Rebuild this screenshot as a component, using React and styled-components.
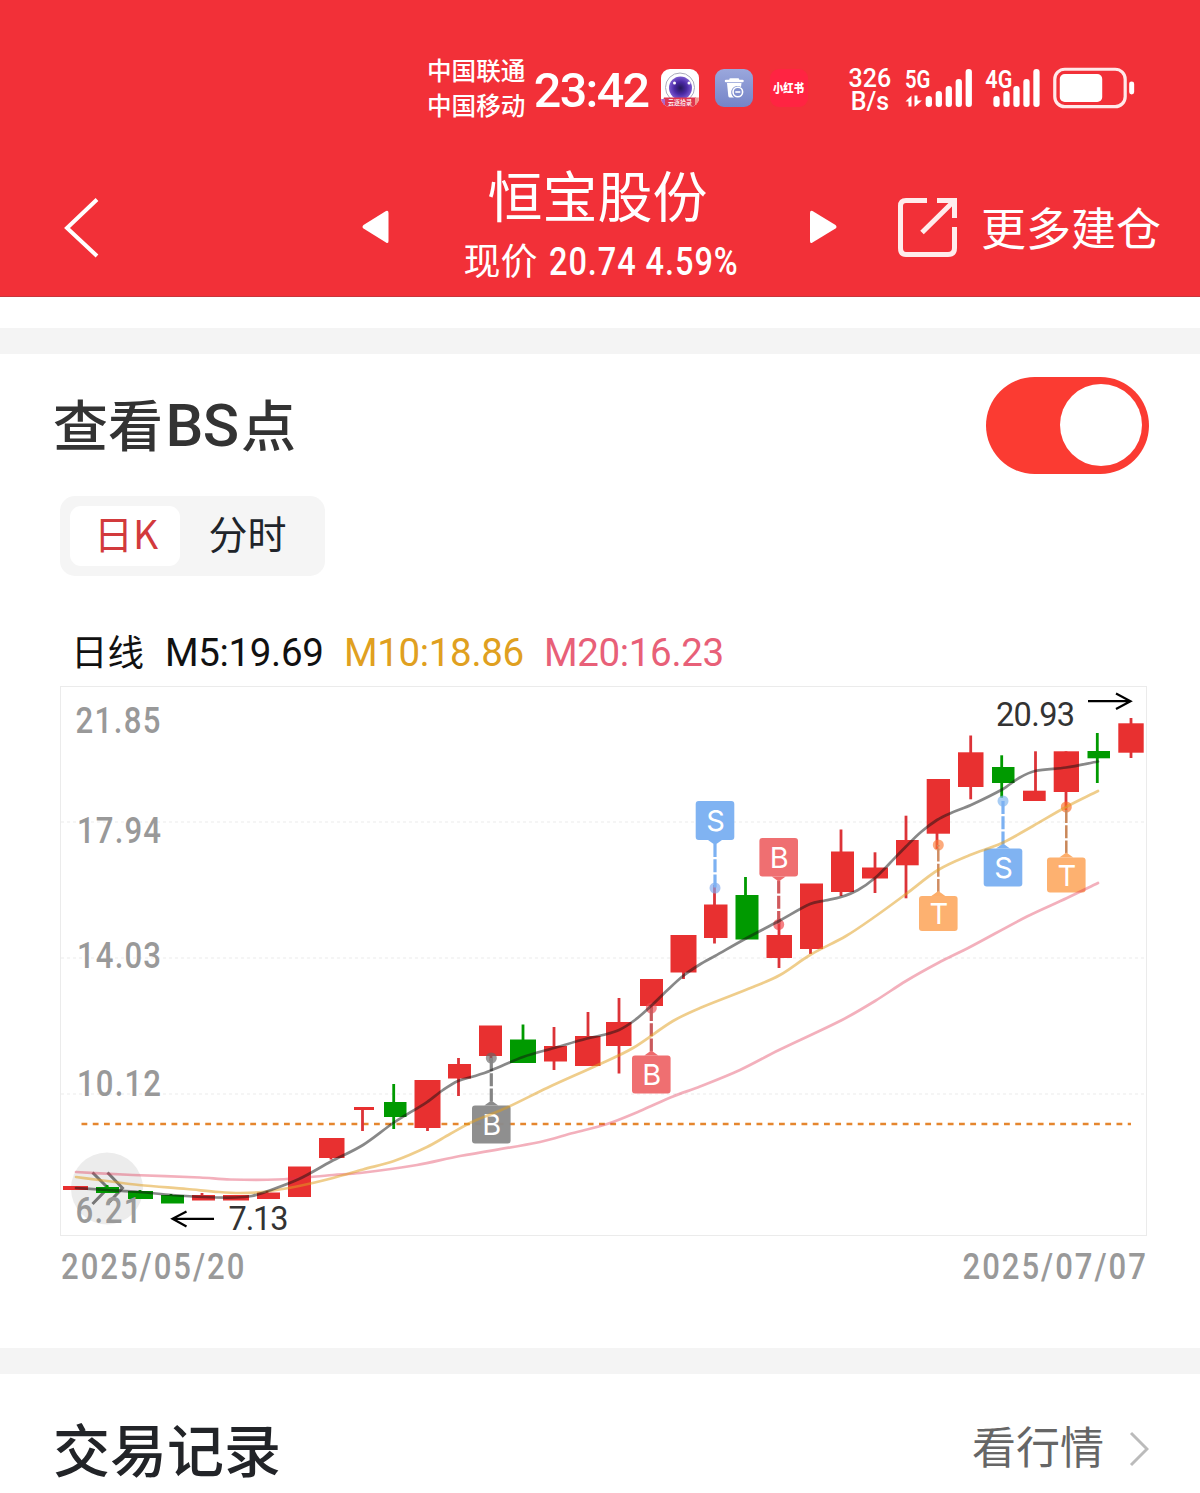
import React from "react";
import styled, { createGlobalStyle } from "styled-components";

const GlobalStyle = createGlobalStyle`
  * { box-sizing: border-box; }
  body { margin: 0; background: #fff; }
`;

const CJK = `"Noto Sans CJK SC", "Noto Sans", sans-serif`;
const DIN = `Roboto, "Noto Sans CJK SC", sans-serif`;

const Page = styled.main`
  width: 1200px;
  height: 1493px;
  overflow: hidden;
  display: flex;
  flex-direction: column;
  background: #fff;
  font-family: ${CJK};
  white-space: nowrap;
`;

const Header = styled.header`
  height: 297px;
  flex: none;
  background: #f23038;
  border-bottom: 1px solid #c8353b;
  color: #fff;
  display: flex;
  flex-direction: column;
`;

const StatusBar = styled.div`
  height: 124px;
  padding: 52px 64px 0 427px;
  display: flex;
  align-items: flex-start;
`;

const Carriers = styled.div`
  width: 107px;
  font-size: 24.6px;
  font-weight: 500;
  line-height: 35px;
`;

const Clock = styled.div`
  width: 127px;
  padding-top: 11px;
  font: 500 48.5px/56px ${DIN};
  letter-spacing: -1.7px;
`;

const AppIcons = styled.div`
  width: 188px;
  padding-top: 17px;
  display: flex;
  gap: 16.5px;
`;

const Speed = styled.div`
  width: 43px;
  margin-right: 13px;
  padding-top: 15px;
  font: 500 25px/23px ${DIN};
  text-align: center;
`;

const Signals = styled.svg`
  display: block;
  margin-top: 13px;
`;

const NavBar = styled.nav`
  flex: 1;
  padding: 0 40px 0 64px;
  display: flex;
  align-items: flex-start;
`;

const NavIcon = styled.svg`
  flex: none;
  margin-top: ${(p) => p.$top}px;
  margin-right: ${(p) => p.$gap}px;
`;

const TitleBlock = styled.div`
  width: 274px;
  margin-right: 72px;
  display: flex;
  flex-direction: column;
  align-items: center;
`;

const StockName = styled.h1`
  margin: 29px 0 0;
  font: 400 55px/80px ${CJK};
  padding-right: 7px;
`;

const Quote = styled.div`
  display: flex;
  gap: 11px;
  width: 275px;
  height: 53px;
  align-items: center;
  font: 400 37px/53px ${CJK};
`;

const QuoteValue = styled.span`
  padding-top: 5px;
  font: 500 38px/53px ${DIN};
  letter-spacing: 1.1px;
  transform: scaleX(0.855);
  transform-origin: left;
  width: 188px;
`;

const MoreLabel = styled.span`
  margin-top: 70px;
  font-size: 45px;
  line-height: 66px;
`;

const Gap = styled.div`
  height: 26px;
  flex: none;
  margin-top: ${(p) => p.$top || 0}px;
  background: #f4f4f4;
`;

const Section = styled.section`
  flex: none;
  display: flex;
  flex-direction: column;
  padding: 0 51px 0 53px;
`;

const SectionHead = styled.div`
  display: flex;
  justify-content: space-between;
  align-items: center;
  height: ${(p) => p.$height}px;
`;

const SectionTitle = styled.h2`
  margin: 0;
  padding-bottom: ${(p) => p.$lift}px;
  display: flex;
  font: 500 ${(p) => p.$size}px/80px ${CJK};
  color: ${(p) => p.$color};
`;

const TitleLatin = styled.span`
  width: 78px;
  padding-top: 2px;
  text-align: center;
  font: 500 60px/84px ${DIN};
  letter-spacing: -0.5px;
`;

const Switch = styled.button`
  width: 163px;
  height: 97px;
  padding: 0 7px;
  border: 0;
  border-radius: 49px;
  background: #fb3b32;
  display: flex;
  justify-content: flex-end;
  align-items: center;
`;

const Knob = styled.span`
  width: 82px;
  height: 82px;
  border-radius: 50%;
  background: #fff;
`;

const Tabs = styled.div`
  width: 265px;
  height: 80px;
  margin: 0 0 0 7px;
  padding: 10px;
  border-radius: 15px;
  background: #f5f5f5;
  display: flex;
`;

const Tab = styled.button`
  width: ${(p) => (p.$active ? 110 : 135)}px;
  height: 60px;
  padding: 0 0 8px ${(p) => (p.$active ? 2 : 0)}px;
  border: 0;
  border-radius: 11px;
  background: ${(p) => (p.$active ? "#fff" : "transparent")};
  color: ${(p) => (p.$active ? "#d23a3c" : "#20242a")};
  font: 400 39px/52px ${CJK};
`;

const Legend = styled.div`
  margin-top: 47px;
  padding-left: 18px;
  height: 63px;
  display: flex;
  gap: 21px;
  font: 400 36.5px/56px ${CJK};
  color: #111;
`;

const LegendItem = styled.span`
  width: ${(p) => p.$width}px;
  padding-top: 2px;
  color: ${(p) => p.$color};
  font: 400 38.5px/56px ${DIN};
  letter-spacing: -0.35px;
`;

const Chart = styled.svg`
  display: block;
  overflow: visible;
  margin: 0 0 0 7px;
`;

const Dates = styled.div`
  display: flex;
  justify-content: space-between;
  margin: 0 1px 0 8px;
  height: 112px;
`;

const DateText = styled.span`
  font: 500 37.5px/60px ${DIN};
  letter-spacing: 2.4px;
  color: #999;
  transform: scaleX(0.828);
  transform-origin: ${(p) => p.$from};
`;

const MarketLink = styled.a`
  display: flex;
  align-items: center;
  gap: 25px;
  color: #666;
  font-size: 44px;
  line-height: 64px;
`;

const LinkText = styled.span`
  padding-bottom: 9px;
`;

const RED = "#e83030";
const GREEN = "#009a00";

// left, right, body top, body bottom, wick x, wick top, wick bottom, rising
const candles = [
  [63, 88, 1186, 1190, 76, 1186, 1190, 1],
  [96, 119, 1187, 1193, 107, 1185, 1193, 0],
  [128, 153, 1191, 1199, 140, 1190, 1199, 0],
  [161, 184, 1195, 1203.5, 171, 1194, 1203, 0],
  [192, 215, 1195, 1200.5, 202, 1193, 1200, 1],
  [223, 249, 1195, 1200.5, 236, 1195, 1200, 1],
  [257, 280, 1192.5, 1199, 267, 1191, 1199, 1],
  [288, 311, 1166.5, 1197, 299, 1167, 1197, 1],
  [319, 344.5, 1138, 1158, 331, 1138, 1159.5, 1],
  [354, 374, 1107, 1110, 362.5, 1107, 1131, 1],
  [384, 406.5, 1102, 1117, 393.7, 1084, 1129, 0],
  [414.5, 440.5, 1080, 1128, 427.5, 1080, 1131, 1],
  [448, 471, 1064, 1078.5, 458.5, 1058, 1096, 1],
  [479, 502, 1025.5, 1056, 491, 1026, 1061, 1],
  [510, 536, 1039.5, 1063, 523, 1024.5, 1063, 0],
  [544, 567, 1046, 1061.5, 554, 1027, 1070, 1],
  [575, 600.5, 1036, 1066, 588, 1012, 1066, 1],
  [606, 631.5, 1022, 1046, 619, 998, 1073.5, 1],
  [640, 663, 979, 1006, 651.5, 979, 1009, 1],
  [670.5, 696.5, 935, 972.5, 683.5, 935, 979, 1],
  [704, 727.5, 904.5, 938, 714.5, 885, 943.5, 1],
  [735.5, 758.5, 895, 939.5, 745.5, 877, 939, 0],
  [766.5, 792, 935, 958, 779, 918, 968, 1],
  [800, 823, 883.5, 949, 810.5, 884, 954, 1],
  [831, 854, 851.5, 892, 841, 829.5, 896, 1],
  [862, 888, 867.5, 878.5, 875, 852.3, 893, 1],
  [896, 918.7, 840, 865.3, 906, 815.7, 898.3, 1],
  [926.7, 950, 779, 833.7, 937, 779, 849, 1],
  [958, 983.5, 752.3, 787, 970.7, 735.5, 799.3, 1],
  [992, 1014.5, 767, 783, 1001.7, 755.3, 797.7, 0],
  [1023, 1045.7, 790.7, 801, 1035.5, 751.3, 801, 1],
  [1053.7, 1079, 751.3, 792, 1066, 751.3, 810, 1],
  [1087.5, 1110, 751, 758.3, 1097.3, 733, 783, 0],
  [1118.3, 1143.7, 723.3, 752.7, 1131, 718, 758, 1],
];

const ma5 = [[76,1188],[107,1190],[139,1192],[172,1195],[203,1197],[235,1197.5],[252,1196],[268,1191],[299,1179],[331,1161.5],[363,1145],[394,1122.5],[427,1102],[443,1090],[458,1081],[475,1076],[491,1070.5],[523,1057],[554,1048],[587,1038.5],[603,1035],[619,1030],[635,1020],[651,1006],[667,990.5],[683,976],[699,965],[715,956],[745,939],[779,921],[810,904],[825,900.5],[841,897],[858,890],[875,878],[890,863],[906,846.5],[921,832],[937,820],[951,813],[971,805],[1003,789],[1019,778],[1035,771],[1066,767.5],[1098,761.5]];
const ma10 = [[76,1177],[107,1181],[139,1185],[187,1189],[219,1192],[240,1193],[262,1192],[299,1186],[333,1178],[363,1169.5],[394,1161],[427,1147],[450,1134],[473,1121.5],[507,1107.5],[547,1088],[600,1064],[633,1048],[673,1021],[700,1008],[753,987],[780,975],[810,955],[846,936],[873,918],[906,894],[938,870],[970,855],[1002,843],[1033,826],[1066,807],[1098,791]];
const ma20 = [[76,1172],[133,1175],[200,1177.5],[230,1179.5],[277,1179.5],[333,1175],[360,1173],[417,1165],[460,1156],[540,1142],[573,1133],[607,1124],[640,1111],[673,1096.5],[700,1086.5],[740,1070],[779,1050],[842,1020],[875,1001],[906,981],[938,963],[970,947],[1027,916.5],[1067,898],[1098,883]];

const slope = (pts, i) => {
  const a = pts[Math.max(i - 1, 0)];
  const b = pts[Math.min(i + 1, pts.length - 1)];
  return (b[1] - a[1]) / (b[0] - a[0]);
};

const smooth = (pts) =>
  pts.reduce((d, p, i) => {
    if (i === 0) return `M${p[0]} ${p[1]}`;
    const a = pts[i - 1];
    const h = (p[0] - a[0]) / 3;
    return `${d} C${a[0] + h} ${a[1] + h * slope(pts, i - 1)} ${p[0] - h} ${p[1] - h * slope(pts, i)} ${p[0]} ${p[1]}`;
  }, "");

const NARROW = 0.83;

const AxisText = ({ x, y, w, children }) => (
  <text transform={`translate(${x} ${y}) scale(${NARROW} 1)`} textLength={w / NARROW} fontFamily="Roboto, sans-serif" fontWeight="500" fontSize="37.5" fill="#999">{children}</text>
);

// x, box top, box height, dot y, letter, box fill, stem colour, dot colour, box above the dot
const markers = [
  [491.3, 1105.5, 38, 1058, "B", "#8b8b8b", "#858585", "#666", false],
  [651.3, 1055.5, 38, 1008, "B", "#ee6a6c", "#c95a5d", "#f04a50", false],
  [715, 801, 39, 888, "S", "#7cb1f2", "#7cb1f2", "#7ca6ee", true],
  [778.7, 838, 38.5, 924.5, "B", "#ee6a6c", "#d05a5d", "#f03a40", true],
  [938.3, 896, 35, 845, "T", "#fdae6b", "#d08d62", "#fb7d35", false],
  [1003, 848.5, 38, 801, "S", "#7cb1f2", "#7cb1f2", "#7ab2ee", false],
  [1066.3, 857.5, 35, 807, "T", "#fdae6b", "#c98759", "#fb6d25", false],
];

const Marker = ({ m }) => {
  const [x, top, h, dot, letter, fill, stem, dotFill, above] = m;
  const edge = above ? top + h : top;
  const dir = above ? 1 : -1;
  const tip = edge + dir * 4;
  const w = letter === "T" ? 2.5 : 3.2;
  return (
    <g>
      <circle cx={x} cy={dot} r="5.5" fill={dotFill} opacity="0.65" />
      <line x1={x} x2={x} y1={tip} y2={dot} stroke={stem} strokeWidth={w} strokeDasharray="13 2.2" />
      <path d={`M${x - 7} ${edge}L${x} ${edge + dir * 5}L${x + 7} ${edge}z`} fill={fill} />
      <rect x={x - 19.3} y={top} width="38.6" height={h} rx="3" fill={fill} opacity="0.97" />
      <text x={x + 0.5} y={top + h / 2 + 10.5} textAnchor="middle" fontFamily="Inter, sans-serif" fontSize="29" fill="#fff">{letter}</text>
    </g>
  );
};

const PriceChart = () => (
  <Chart width="1087" height="550" viewBox="60 686 1087 550">
    <rect x="60.5" y="686.5" width="1086" height="549" fill="#fff" stroke="#ebebeb" />
    {[822, 958, 1094].map((y) => (
      <line key={y} x1="61" x2="1146" y1={y} y2={y} stroke="#f2f2f2" strokeWidth="1.5" strokeDasharray="3 3" />
    ))}
    <line x1="81.5" x2="1131" y1="1124" y2="1124" stroke="#e5862e" strokeWidth="2.6" strokeDasharray="5.8 5.45" />
    <circle cx="107" cy="1188.5" r="36" fill="#ececec" />
    <path d="M92.5 1172.5L108 1188L92.5 1204M107.5 1172.5L122.5 1188L107.5 1204" fill="none" stroke="#777" strokeWidth="3" />
    {candles.map(([l, r, t, b, x, wt, wb, up]) => (
      <g key={l} fill={up ? RED : GREEN}>
        <rect x={x - 1.4} y={wt} width="2.8" height={wb - wt} fill={up ? "#dc3338" : GREEN} />
        <rect x={l} y={t} width={r - l} height={b - t} />
      </g>
    ))}
    {markers.map((m) => <Marker key={m[0]} m={m} />)}
    <g fill="none" strokeWidth="2.7" strokeLinecap="round">
      <path d={smooth(ma20)} stroke="#e03050" opacity="0.38" />
      <path d={smooth(ma10)} stroke="#e0a020" opacity="0.52" />
      <path d={smooth(ma5)} stroke="#111" opacity="0.5" />
    </g>
    <AxisText x={75.5} y={733} w={85}>21.85</AxisText>
    <AxisText x={77} y={843} w={84}>17.94</AxisText>
    <AxisText x={77} y={968} w={84}>14.03</AxisText>
    <AxisText x={77} y={1096} w={84}>10.12</AxisText>
    <AxisText x={75.5} y={1223} w={66}>6.21</AxisText>
    <g fontFamily="Roboto, sans-serif" fontSize="32.5" fill="#333">
      <text x="996" y="726" textLength="79">20.93</text>
      <text x="228.5" y="1230" textLength="60">7.13</text>
    </g>
    <path d="M1088 701.2H1130M1116 693.5L1130.5 701.2L1116 709M214 1218.8H173M186.5 1211.5L172.5 1218.8L186.5 1226.5" fill="none" stroke="#000" strokeWidth="2.2" />
  </Chart>
);

const CameraIcon = () => (
  <svg width="38" height="38" viewBox="0 0 38 38">
    <defs>
      <clipPath id="tile"><rect width="38" height="38" rx="9" /></clipPath>
      <radialGradient id="lens"><stop offset="0" stopColor="#241858" /><stop offset=".55" stopColor="#4b2aa5" /><stop offset="1" stopColor="#7b5bd0" /></radialGradient>
    </defs>
    <g clipPath="url(#tile)">
      <rect width="38" height="38" fill="#fff" />
      <circle cx="19" cy="18.5" r="14.5" fill="none" stroke="#aab" />
      <circle cx="19.5" cy="19" r="11.5" fill="url(#lens)" />
      <circle cx="13.5" cy="14" r="1.5" fill="#fff" /><circle cx="28" cy="14" r="1.5" fill="#fff" />
      <path d="M3 28.5H35L38 38H0z" fill="#df3650" />
      <rect y="30" width="4" height="8" fill="#b067c8" /><rect x="34" y="28.5" width="4" height="9.5" fill="#f09a90" />
      <text x="19" y="35.8" textAnchor="middle" textLength="24" lengthAdjust="spacingAndGlyphs" fontFamily="Noto Sans CJK SC" fontSize="6.8" fontWeight="500" fill="#fff">云逐拾录</text>
    </g>
  </svg>
);

const CleanerIcon = () => (
  <svg width="38" height="38" viewBox="0 0 38 38">
    <defs><linearGradient id="cl" x2="0" y2="1"><stop offset="0" stopColor="#9aa7dc" /><stop offset="1" stopColor="#7584c8" /></linearGradient></defs>
    <rect width="38" height="38" rx="9" fill="url(#cl)" />
    <path d="M11 12H27.500M15.500 10.500H23" stroke="#fff" strokeWidth="2.5" strokeLinecap="round" />
    <path d="M12 14H26.500L26 18A6 6 0 0 0 19 28.500H15Q13.500 28.500 13.300 27z" fill="#fff" />
    <circle cx="22.8" cy="23" r="4.8" fill="#8391d0" stroke="#fff" strokeWidth="1.6" />
    <path d="M20.3 23H25.3" stroke="#fff" strokeWidth="1.6" />
  </svg>
);

const RedNoteIcon = () => (
  <svg width="38" height="38" viewBox="0 0 38 38">
    <rect width="38" height="38" rx="9" fill="#ff2442" />
    <text x="18.5" y="23.5" textAnchor="middle" textLength="31" lengthAdjust="spacingAndGlyphs" fontFamily="Noto Sans CJK SC" fontWeight="900" fontSize="12" fill="#fff">小红书</text>
  </svg>
);

const bars = (x0) =>
  [[0, 96], [10, 91], [20, 86], [30, 79], [40, 69]].map(([dx, y]) => (
    <rect key={dx} x={x0 + dx} y={y} width="6.3" height={107 - y} rx="3" />
  ));

const SignalIcons = () => (
  <Signals width="232" height="46" viewBox="904 65 232 46" fill="#fff">
    <text x="905" y="88" textLength="25.5" lengthAdjust="spacingAndGlyphs" fontFamily="Roboto, sans-serif" fontWeight="600" fontSize="25.5">5G</text>
    <text x="985.5" y="88" textLength="27" lengthAdjust="spacingAndGlyphs" fontFamily="Roboto, sans-serif" fontWeight="600" fontSize="25.5">4G</text>
    <path d="M905.5 101.5L911.5 95.5V106.5H908.5V101.5zM914.5 95.5H917.5V100.5H922L915 106.5H914.5z" />
    {bars(925.7)}
    {bars(993.5)}
    <rect x="1055" y="69.2" width="70.5" height="37.5" rx="10" fill="none" stroke="#ffe9ea" strokeWidth="3.2" />
    <rect x="1060" y="74" width="42.5" height="28" rx="5" />
    <rect x="1129.5" y="81.5" width="5" height="13" rx="2.5" />
  </Signals>
);

export default function App() {
  return (
    <Page>
      <GlobalStyle />
      <Header>
        <StatusBar>
          <Carriers>中国联通<br />中国移动</Carriers>
          <Clock>23:42</Clock>
          <AppIcons><CameraIcon /><CleanerIcon /><RedNoteIcon /></AppIcons>
          <Speed>326<br />B/s</Speed>
          <SignalIcons />
        </StatusBar>
        <NavBar>
          <NavIcon $top={73} $gap={262} width="36" height="62" viewBox="64 197 36 62" fill="none" stroke="#fff" strokeWidth="4">
            <path d="M97 199.5L67 228L97 256" />
          </NavIcon>
          <NavIcon $top={86} $gap={74} width="28" height="34" viewBox="0 0 28 34" fill="#fff">
            <path d="M24 1Q26.5 0 26.5 3V31Q26.5 34 24 32.5L1.5 18.5Q-.5 17 1.5 15z" />
          </NavIcon>
          <TitleBlock>
            <StockName>恒宝股份</StockName>
            <Quote>现价<QuoteValue>20.74 4.59%</QuoteValue></Quote>
          </TitleBlock>
          <NavIcon $top={86} $gap={59} width="28" height="34" viewBox="0 0 28 34" fill="#fff">
            <path d="M2.5 1Q0 0 0 3V31Q0 34 2.5 32.5L25.5 18.5Q27.5 17 25.5 15z" />
          </NavIcon>
          <NavIcon $top={73} $gap={23} width="61" height="61" viewBox="897 197 61 61" fill="none" stroke="#ffecec" strokeWidth="5">
            <path d="M927 200.500H906Q900.500 200.500 900.500 206V248Q900.500 254.500 906 254.500H948Q954.500 254.500 954.500 248V227M937 200.500H954.500V218M954.500 200.500L922 232.500" />
          </NavIcon>
          <MoreLabel>更多建仓</MoreLabel>
        </NavBar>
      </Header>
      <Gap $top={31} />
      <Section>
        <SectionHead $height={142}>
          <SectionTitle $size={55} $lift={1} $color="#333">查看<TitleLatin>BS</TitleLatin>点</SectionTitle>
          <Switch role="switch" aria-checked="true"><Knob /></Switch>
        </SectionHead>
        <Tabs>
          <Tab $active>日K</Tab>
          <Tab>分时</Tab>
        </Tabs>
        <Legend>
          日线
          <LegendItem $width={158} $color="#111">M5:19.69</LegendItem>
          <LegendItem $width={179} $color="#e0a020">M10:18.86</LegendItem>
          <LegendItem $width={179} $color="#e86078">M20:16.23</LegendItem>
        </Legend>
        <PriceChart />
        <Dates>
          <DateText $from="left">2025/05/20</DateText>
          <DateText $from="right">2025/07/07</DateText>
        </Dates>
      </Section>
      <Gap />
      <Section>
        <SectionHead $height={150}>
          <SectionTitle $size={57} $lift={5} $color="#222428">交易记录</SectionTitle>
          <MarketLink>
            <LinkText>看行情</LinkText>
            <svg width="20" height="36" viewBox="0 0 20 36" fill="none" stroke="#bbb" strokeWidth="3"><path d="M2 2L18 18L2 34" /></svg>
          </MarketLink>
        </SectionHead>
      </Section>
    </Page>
  );
}
